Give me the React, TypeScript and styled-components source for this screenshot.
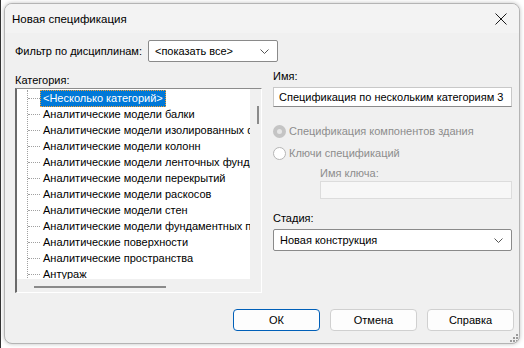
import React from "react";
import styled, { createGlobalStyle, css } from "styled-components";

const GlobalStyle = createGlobalStyle`
    html, body {
        margin:0;
        padding:0;
        background:#fff;
    }
    body {
        font-family: "Liberation Sans", Arial, sans-serif;
        font-size:11px;
        color:#000;
    }
`;

const Desktop = styled.div`
    width:524px;
    height:348px;
    box-sizing:border-box;
    padding:3px 4px 4px 3px;
    background:#fff;
    border-left:1px solid #333;
    overflow:hidden;
`;

const Dialog = styled.div`
    height:100%;
    box-sizing:border-box;
    border:1px solid #b4b4b4;
    border-radius:8px;
    background:#f0f0f0;
    box-shadow:0 0 4px rgba(0,0,0,0.25);
    display:flex;
    flex-direction:column;
    overflow:hidden;
`;

const TitleBar = styled.div`
    height:29px;
    flex:none;
    display:flex;
    align-items:center;
    justify-content:space-between;
    padding:0 8px 0 7px;
    background:#f3f3f3;
`;

const Title = styled.span`
    font-size:11.5px;
`;

const CloseBtn = styled.button`
    width:20px;
    height:20px;
    padding:0;
    border:0;
    background:transparent;
    display:flex;
    align-items:center;
    justify-content:center;
`;

const Body = styled.div`
    flex:1;
    display:flex;
    flex-direction:column;
    padding:7px 7px 12px 10px;
    position:relative;
`;

const FilterRow = styled.div`
    display:flex;
    align-items:center;
    height:22px;
    gap:6px;
`;

const Label = styled.div<{disabled?: boolean}>`
    line-height:16px;
    white-space:nowrap;
    ${props => props.disabled && css`
        color:#8d8d8d;
    `}
`;

const Select = styled.div<{width?: number}>`
    box-sizing:border-box;
    width:${props => props.width ? props.width + "px" : "100%"};
    height:22px;
    background:#fff;
    border:1px solid #8a8a8a;
    border-radius:2px;
    display:flex;
    align-items:center;
    justify-content:space-between;
    padding:0 8px 0 6px;
`;

const Columns = styled.div`
    display:grid;
    grid-template-columns:247px 239px;
    column-gap:11px;
    margin-top:5px;
`;

const Column = styled.div`
    display:flex;
    flex-direction:column;
`;

const TreeBox = styled.div`
    height:205px;
    box-sizing:border-box;
    border-top:1px solid #8c8c8c;
    border-left:2px solid #6a6a6a;
    border-right:1px solid #fff;
    border-bottom:1px solid #fff;
    display:grid;
    grid-template-columns:1fr 11px;
    grid-template-rows:1fr 13px;
    background:#f0f0f0;
`;

const TreeView = styled.div`
    background:#fff;
    overflow:hidden;
    padding-top:1px;
`;

const Branch = styled.div`
    margin-left:10px;
    border-left:1px dotted #a0a0a0;
    height:200px;
`;

const Row = styled.div`
    display:flex;
    align-items:center;
    height:16px;
    white-space:nowrap;
`;

const Connector = styled.span`
    width:12px;
    flex:none;
    border-top:1px dotted #a0a0a0;
`;

const ItemText = styled.span<{selected?: boolean}>`
    padding:0 2px;
    line-height:15px;
    border:1px solid transparent;
    ${props => props.selected && css`
        background:#0078d7;
        color:#fff;
        border:1px dotted #f7a02f;
    `}
`;

const VScroll = styled.div`
    display:flex;
    justify-content:flex-end;
    padding:17px 2px 0 0;
`;

const VThumb = styled.div`
    width:2px;
    height:18px;
    background:#8a8a8a;
`;

const HScroll = styled.div`
    padding:7px 0 0 17px;
`;

const HThumb = styled.div`
    width:132px;
    height:2px;
    background:#8a8a8a;
`;

const Input = styled.div<{disabled?: boolean}>`
    box-sizing:border-box;
    height:20px;
    background:#fff;
    border:1px solid #c8c8c8;
    border-bottom-color:#8a8a8a;
    padding:0 5px;
    display:flex;
    align-items:center;
    white-space:nowrap;
    overflow:hidden;
    ${props => props.disabled && css`
        background:#f7f7f7;
        border-color:#dcdcdc;
        height:18px;
    `}
`;

const RadioRow = styled.div`
    display:flex;
    align-items:center;
    gap:3px;
    height:16px;
    color:#8d8d8d;
`;

const RadioDot = styled.span<{checked?: boolean}>`
    width:13px;
    height:13px;
    box-sizing:border-box;
    border-radius:50%;
    border:1px solid #b5b5b5;
    background:#fff;
    flex:none;
    ${props => props.checked && css`
        border:4px solid #c4c4c4;
        background:#e6e6e6;
    `}
`;

const KeyBlock = styled.div`
    margin-left:47px;
    display:flex;
    flex-direction:column;
    margin-top:4px;
`;

const Footer = styled.div`
    margin-top:auto;
    margin-right:-2px;
    display:flex;
    justify-content:flex-end;
    gap:10px;
`;

const Button = styled.button<{primary?: boolean}>`
    width:87px;
    height:22px;
    box-sizing:border-box;
    font-family:inherit;
    font-size:11px;
    color:#000;
    background:#fdfdfd;
    border:1px solid #d0d0d0;
    border-radius:4px;
    padding:0;
    ${props => props.primary && css`
        border-color:#005fb8;
    `}
`;

const Grip = styled.svg`
    position:absolute;
    right:1px;
    bottom:1px;
`;

const Chevron = () => (
    <svg width="9" height="5" viewBox="0 0 9 5">
        <path d="M0.5 0.5 L4.5 4.5 L8.5 0.5" fill="none" stroke="#555" strokeWidth="1"/>
    </svg>
);

const categories = [
    "Аналитические модели балки",
    "Аналитические модели изолированных фундаментов",
    "Аналитические модели колонн",
    "Аналитические модели ленточных фундаментов",
    "Аналитические модели перекрытий",
    "Аналитические модели раскосов",
    "Аналитические модели стен",
    "Аналитические модели фундаментных плит",
    "Аналитические поверхности",
    "Аналитические пространства",
    "Антураж",
    "Арматура несущих конструкций",
];

function App(){
    return(
        <>
        <GlobalStyle/>
        <Desktop>
            <Dialog>
                <TitleBar>
                    <Title>Новая спецификация</Title>
                    <CloseBtn>
                        <svg width="12" height="12" viewBox="0 0 12 12">
                            <path d="M0.5 0.5 L11.5 11.5 M11.5 0.5 L0.5 11.5" stroke="#1a1a1a" strokeWidth="1"/>
                        </svg>
                    </CloseBtn>
                </TitleBar>
                <Body>
                    <FilterRow>
                        <Label>Фильтр по дисциплинам:</Label>
                        <Select width={130}>
                            <span>&lt;показать все&gt;</span>
                            <Chevron/>
                        </Select>
                    </FilterRow>
                    <Columns>
                        <Column>
                            <Label style={{marginTop: 5}}>Категория:</Label>
                            <TreeBox>
                                <TreeView>
                                    <Branch>
                                        <Row>
                                            <Connector/>
                                            <ItemText selected>&lt;Несколько категорий&gt;</ItemText>
                                        </Row>
                                        {categories.map(c => (
                                            <Row key={c}>
                                                <Connector/>
                                                <ItemText>{c}</ItemText>
                                            </Row>
                                        ))}
                                    </Branch>
                                </TreeView>
                                <VScroll><VThumb/></VScroll>
                                <HScroll><HThumb/></HScroll>
                                <div/>
                            </TreeBox>
                        </Column>
                        <Column>
                            <Label style={{marginTop: 1}}>Имя:</Label>
                            <Input style={{marginTop: 3}}>Спецификация по нескольким категориям 3</Input>
                            <RadioRow style={{marginTop: 16}}>
                                <RadioDot checked/>
                                <span>Спецификация компонентов здания</span>
                            </RadioRow>
                            <RadioRow style={{marginTop: 6}}>
                                <RadioDot/>
                                <span>Ключи спецификаций</span>
                            </RadioRow>
                            <KeyBlock>
                                <Label disabled>Имя ключа:</Label>
                                <Input disabled/>
                            </KeyBlock>
                            <Label style={{marginTop: 11}}>Стадия:</Label>
                            <Select style={{marginTop: 3}}>
                                <span>Новая конструкция</span>
                                <Chevron/>
                            </Select>
                        </Column>
                    </Columns>
                    <Footer>
                        <Button primary>ОК</Button>
                        <Button>Отмена</Button>
                        <Button>Справка</Button>
                    </Footer>
                    <Grip width="8" height="8" viewBox="0 0 8 8">
                        <g fill="#9a9a9a">
                            <rect x="6" y="0" width="2" height="2"/>
                            <rect x="3" y="3" width="2" height="2"/>
                            <rect x="6" y="3" width="2" height="2"/>
                            <rect x="0" y="6" width="2" height="2"/>
                            <rect x="3" y="6" width="2" height="2"/>
                            <rect x="6" y="6" width="2" height="2"/>
                        </g>
                    </Grip>
                </Body>
            </Dialog>
        </Desktop>
        </>
    )
}

export default App;
